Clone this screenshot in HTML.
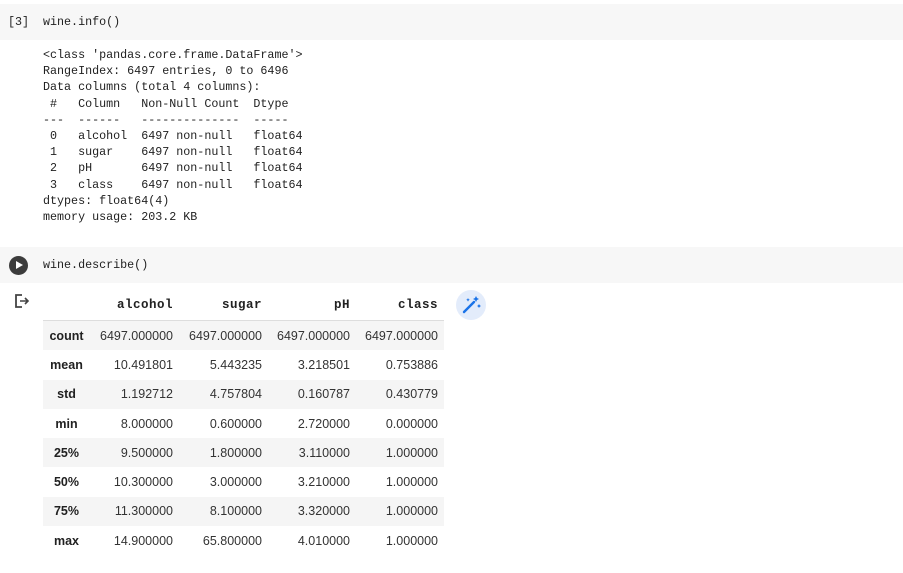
<!DOCTYPE html>
<html><head><meta charset="utf-8"><style>
body{margin:0;width:903px;height:573px;background:#fff;position:relative;overflow:hidden;font-family:"Liberation Sans",sans-serif;}
.cell{position:absolute;left:0;width:903px;height:36px;background:#f7f7f7;}
.mono{font-family:"Liberation Mono",monospace;font-size:11.7px;color:#212121;}
pre{margin:0;position:absolute;left:43px;top:47px;line-height:16.2px;}
table{position:absolute;left:43px;top:290px;border-collapse:collapse;font-size:12.5px;color:#333;}
td,th{text-align:right;padding:0 6px;height:29.3px;white-space:nowrap;}
thead th{font-family:"Liberation Mono",monospace;font-weight:bold;font-size:12.5px;letter-spacing:0.5px;border-bottom:1px solid #ddd;height:30px;color:#212121;}
tbody th{text-align:center;font-weight:bold;color:#212121;}
tbody tr:nth-child(odd){background:#f5f5f5;}
</style></head><body>
<div class="cell" style="top:4px"><span class="mono" style="position:absolute;left:8px;top:11px">[3]</span><span class="mono" style="position:absolute;left:43px;top:11px">wine.info()</span></div>
<pre class="mono">&lt;class 'pandas.core.frame.DataFrame'&gt;
RangeIndex: 6497 entries, 0 to 6496
Data columns (total 4 columns):
 #   Column   Non-Null Count  Dtype  
---  ------   --------------  -----  
 0   alcohol  6497 non-null   float64
 1   sugar    6497 non-null   float64
 2   pH       6497 non-null   float64
 3   class    6497 non-null   float64
dtypes: float64(4)
memory usage: 203.2 KB</pre>
<div class="cell" style="top:247px"><div style="position:absolute;left:9px;top:9px;width:19px;height:19px;border-radius:50%;background:#3c3c3c"><div style="position:absolute;left:7px;top:5px;border-left:7px solid #fff;border-top:4.5px solid transparent;border-bottom:4.5px solid transparent"></div></div><span class="mono" style="position:absolute;left:43px;top:11px">wine.describe()</span></div>
<svg style="position:absolute;left:14px;top:294px" width="16" height="14" viewBox="0 0 16 14"><path d="M8 1H2v12h6" fill="none" stroke="#444" stroke-width="1.8"/><path d="M6 7h8M11 4l3 3-3 3" fill="none" stroke="#444" stroke-width="1.6"/></svg>
<div style="position:absolute;left:456px;top:290px;width:30px;height:30px;border-radius:50%;background:#e3ecfb"><svg width="30" height="30" viewBox="0 0 30 30"><path d="M8 22L18 12" stroke="#1a73e8" stroke-width="2.4" stroke-linecap="round"/><path d="M20 6l1 2 2 1-2 1-1 2-1-2-2-1 2-1z M23 14l.7 1.3 1.3.7-1.3.7-.7 1.3-.7-1.3-1.3-.7 1.3-.7z M12 8l.6 1.2 1.2.6-1.2.6-.6 1.2-.6-1.2-1.2-.6 1.2-.6z" fill="#1a73e8"/></svg></div>
<table>
<thead><tr><th style="width:35px"></th><th style="width:77px">alcohol</th><th style="width:77px">sugar</th><th style="width:76px">pH</th><th style="width:76px">class</th></tr></thead>
<tbody>
<tr><th>count</th><td>6497.000000</td><td>6497.000000</td><td>6497.000000</td><td>6497.000000</td></tr>
<tr><th>mean</th><td>10.491801</td><td>5.443235</td><td>3.218501</td><td>0.753886</td></tr>
<tr><th>std</th><td>1.192712</td><td>4.757804</td><td>0.160787</td><td>0.430779</td></tr>
<tr><th>min</th><td>8.000000</td><td>0.600000</td><td>2.720000</td><td>0.000000</td></tr>
<tr><th>25%</th><td>9.500000</td><td>1.800000</td><td>3.110000</td><td>1.000000</td></tr>
<tr><th>50%</th><td>10.300000</td><td>3.000000</td><td>3.210000</td><td>1.000000</td></tr>
<tr><th>75%</th><td>11.300000</td><td>8.100000</td><td>3.320000</td><td>1.000000</td></tr>
<tr><th>max</th><td>14.900000</td><td>65.800000</td><td>4.010000</td><td>1.000000</td></tr>
</tbody></table>
</body></html>
